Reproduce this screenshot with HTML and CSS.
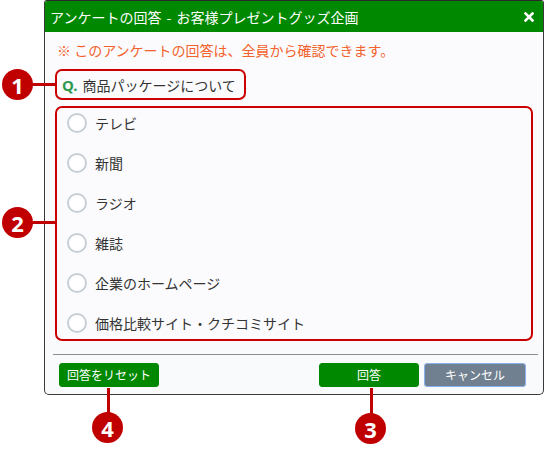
FILE: index.html
```html
<!DOCTYPE html>
<html lang="ja">
<head>
<meta charset="utf-8">
<link rel="stylesheet" href="styles.css">
</head>
<body>
<div class="canvas">
  <div class="dialog">
    <div class="dlg-header">
      <span class="dlg-title">アンケートの回答 - お客様プレゼントグッズ企画</span>
      <svg class="dlg-close" width="10" height="10" viewBox="0 0 10 10"><path d="M1.5 1.5 L8.5 8.5 M8.5 1.5 L1.5 8.5" stroke="#fff" stroke-width="2.6" stroke-linecap="square"/></svg>
    </div>
    <div class="dlg-body">
      <p class="note">※ このアンケートの回答は、全員から確認できます。</p>
      <div class="question"><span class="q-mark">Q.</span><span class="q-text">商品パッケージについて</span></div>
      <div class="options">
        <label class="option"><span class="radio"></span>テレビ</label>
        <label class="option"><span class="radio"></span>新聞</label>
        <label class="option"><span class="radio"></span>ラジオ</label>
        <label class="option"><span class="radio"></span>雑誌</label>
        <label class="option"><span class="radio"></span>企業のホームページ</label>
        <label class="option"><span class="radio"></span>価格比較サイト・クチコミサイト</label>
      </div>
    </div>
    <div class="dlg-sep"></div>
    <div class="dlg-footer">
      <button class="btn btn-green btn-reset">回答をリセット</button>
      <div class="footer-right">
        <button class="btn btn-green">回答</button>
        <button class="btn btn-gray">キャンセル</button>
      </div>
    </div>
  </div>

  <div class="callout c1"><span>1</span></div>
  <div class="hline l1"></div>
  <div class="callout c2"><span>2</span></div>
  <div class="hline l2"></div>
  <div class="callout c3"><span>3</span></div>
  <div class="vline l3"></div>
  <div class="callout c4"><span>4</span></div>
  <div class="vline l4"></div>
</div>
</body>
</html>
```

FILE: styles.css
```css
html, body {
  margin: 0;
  padding: 0;
  background: #ffffff;
}
body {
  font-family: "Noto Sans CJK JP", "Noto Sans", sans-serif;
  color: #333;
}
.canvas {
  position: relative;
  width: 546px;
  height: 450px;
}
.dialog {
  margin-left: 44px;
  width: 498px;
  border: 1px solid #3a3a3a;
  border-top-color: #2a2a2a;
  border-radius: 3px 3px 5px 5px;
  background: #f9fafc;
  box-sizing: content-box;
  overflow: hidden;
}
.dlg-header {
  height: 31px;
  background: #008800;
  display: flex;
  align-items: center;
  justify-content: space-between;
  padding: 0 9px 0 5px;
}
.dlg-title {
  color: #fff;
  font-size: 14px;
  line-height: 20px;
  word-spacing: 2px;
}
.dlg-close {
  display: block;
}
.dlg-body {
  padding: 8px 10px 0 10px;
  background: #fbfbfd;
}
.note {
  margin: 0;
  font-size: 14px;
  line-height: 20px;
  color: #f3622c;
  padding-left: 2px;
}
.question {
  margin-top: 9px;
  width: 191px;
  height: 31px;
  box-sizing: border-box;
  border: 2px solid #cc0000;
  border-radius: 7px;
  display: flex;
  align-items: center;
  padding-left: 5px;
  font-size: 14px;
  color: #333;
}
.q-mark {
  color: #2f9a52;
  font-weight: bold;
  font-size: 15px;
  font-family: "Noto Sans", sans-serif;
  margin-right: 5px;
}
.q-text {
  color: #333;
}
.options {
  margin-top: 6px;
  border: 2px solid #cc0000;
  border-radius: 7px;
  display: flex;
  flex-direction: column;
  gap: 10px;
  padding: 0 10px 1px 10px;
}
.option {
  height: 30px;
  display: flex;
  align-items: center;
  gap: 8px;
  font-size: 14px;
  color: #333;
}
.radio {
  width: 20px;
  height: 20px;
  box-sizing: border-box;
  border: 2px solid #c6ced6;
  border-radius: 50%;
  background: #fff;
}
.dlg-sep {
  margin: 13px 5px 0 8px;
  height: 1px;
  background: #8e8e8e;
}
.dlg-footer {
  display: flex;
  justify-content: space-between;
  align-items: center;
  padding: 8px 17px 7px 14px;
}
.footer-right {
  display: flex;
  gap: 5px;
}
.btn {
  height: 24px;
  width: 100px;
  border-radius: 3px;
  font-family: "Noto Sans CJK JP", sans-serif;
  font-size: 12px;
  color: #fff;
  border: 1px solid transparent;
  padding: 0;
  line-height: 20px;
}
.btn-green {
  background: #008800;
  border-color: #008800;
}
.btn-reset {
  width: 100px;
}
.btn-gray {
  background: #708090;
  border-color: #8ab0ee;
  width: 102px;
}
.callout {
  position: absolute;
  width: 31px;
  height: 31px;
  border-radius: 50%;
  background: #c00000;
  color: #fff;
  display: flex;
  align-items: center;
  justify-content: center;
  font-family: "Noto Sans", "DejaVu Sans", sans-serif;
  font-weight: bold;
  font-size: 22px;
  line-height: 1;
}
.c1 { left: 2px; top: 69px; }
.c2 { left: 2px; top: 207px; }
.c3 { left: 355px; top: 413px; }
.c4 { left: 92px; top: 412px; }
.hline {
  position: absolute;
  height: 3px;
  background: #c00000;
}
.vline {
  position: absolute;
  width: 3px;
  background: #c00000;
}
.l1 { left: 32px; top: 83px; width: 24px; }
.l2 { left: 32px; top: 221px; width: 24px; }
.l3 { left: 370px; top: 388px; height: 26px; }
.l4 { left: 107px; top: 388px; height: 25px; }
```
